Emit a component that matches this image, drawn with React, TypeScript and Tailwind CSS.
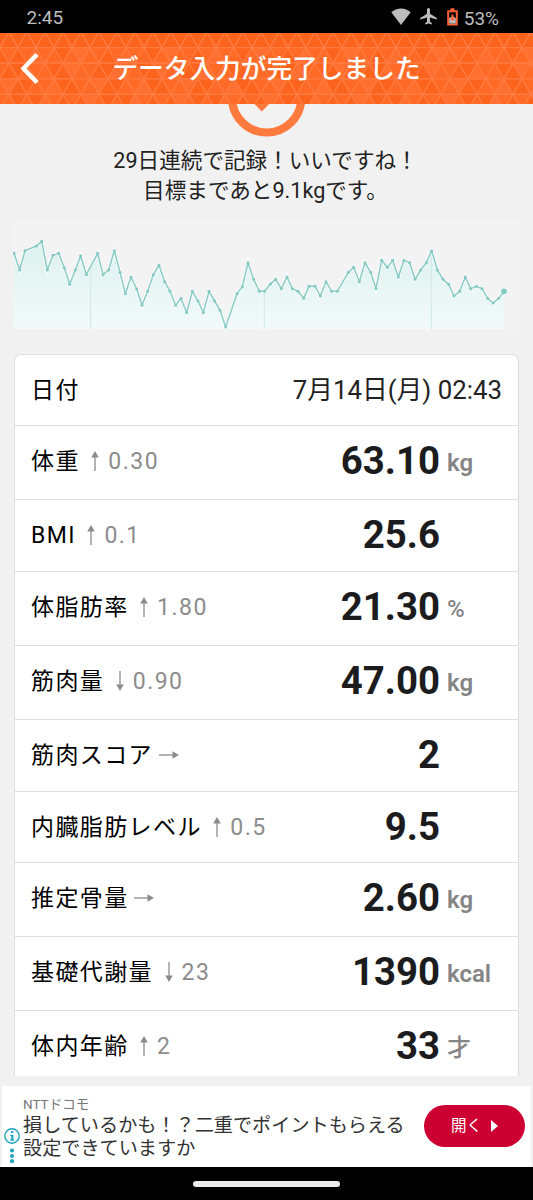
import { Fragment } from 'react'

type Direction = 'up' | 'down' | 'flat'

type Measurement = {
  label: string
  value: string
  unit?: string
  direction: Direction
  delta?: string
  height: string
}

const measurements: Measurement[] = [
  { label: '体重', value: '63.10', unit: 'kg', direction: 'up', delta: '0.30', height: 'h-[74px]' },
  { label: 'BMI', value: '25.6', direction: 'up', delta: '0.1', height: 'h-[72px]' },
  { label: '体脂肪率', value: '21.30', unit: '%', direction: 'up', delta: '1.80', height: 'h-[74px]' },
  { label: '筋肉量', value: '47.00', unit: 'kg', direction: 'down', delta: '0.90', height: 'h-[74px]' },
  { label: '筋肉スコア', value: '2', direction: 'flat', height: 'h-[72px]' },
  { label: '内臓脂肪レベル', value: '9.5', direction: 'up', delta: '0.5', height: 'h-[71px]' },
  { label: '推定骨量', value: '2.60', unit: 'kg', direction: 'flat', height: 'h-[74px]' },
  { label: '基礎代謝量', value: '1390', unit: 'kcal', direction: 'down', delta: '23', height: 'h-[74px]' },
  { label: '体内年齢', value: '33', unit: '才', direction: 'up', delta: '2', height: 'h-[65px]' },
]

// x, y pairs in chart units (3 units = 1px)
const history: [number, number][] = [
  [42, 340], [59, 390], [75, 332], [109, 318], [125, 304], [142, 390], [159, 346], [176, 340],
  [193, 383], [209, 433], [226, 390], [242, 347], [259, 404], [293, 340], [309, 404], [326, 390],
  [343, 332], [360, 397], [376, 461], [393, 411], [410, 447], [426, 496], [443, 454], [460, 404],
  [477, 375], [494, 425], [510, 454], [527, 496], [543, 475], [560, 518], [577, 454], [594, 483],
  [610, 518], [627, 454], [644, 483], [660, 511], [677, 561], [711, 461], [727, 440], [744, 368],
  [761, 418], [778, 454], [794, 454], [811, 432], [827, 418], [844, 446], [861, 411], [877, 446],
  [894, 454], [911, 475], [927, 439], [945, 439], [961, 468], [978, 425], [995, 454], [1012, 454],
  [1045, 397], [1061, 382], [1078, 425], [1095, 368], [1112, 397], [1128, 446], [1145, 361],
  [1162, 382], [1178, 361], [1195, 411], [1212, 361], [1229, 368], [1245, 418], [1262, 390],
  [1279, 368], [1295, 332], [1312, 390], [1329, 418], [1346, 433], [1362, 468], [1379, 454],
  [1396, 411], [1412, 446], [1429, 439], [1446, 446], [1463, 475], [1479, 489], [1496, 475],
  [1512, 454],
]

const months = [
  { x: 272, top: 382 },
  { x: 793, top: 454 },
  { x: 1294, top: 334 },
]

function TrianglePattern() {
  const side = 18
  const rowHeight = 15.6
  const rows = [0, 1, 2, 3, 4]
  const cols = Array.from({ length: 62 }, (_, i) => i - 1)

  return (
    <svg className="absolute inset-0 h-full w-full" viewBox="0 0 533 71" aria-hidden="true">
      <rect width="533" height="71" fill="#ff6c29" />
      {rows.map((row) => {
        const top = row * rowHeight - 1
        const bottom = top + rowHeight
        return (
          <Fragment key={row}>
            {cols.map((col) => {
              const x = (col * side) / 2
              const up = (row + col) % 2 === 0
              const tone = (col * 7 + row * 11 + ((col * row) % 5) * 3) % 7
              const points = up
                ? `${x},${bottom} ${x + side},${bottom} ${x + side / 2},${top}`
                : `${x},${top} ${x + side},${top} ${x + side / 2},${bottom}`
              return (
                <polygon
                  key={col}
                  points={points}
                  fill={tone < 2 ? '#fc641e' : tone < 5 ? '#ff6a27' : '#ff6f30'}
                  stroke="#ff7b40"
                  strokeWidth="1.3"
                />
              )
            })}
          </Fragment>
        )
      })}
    </svg>
  )
}

function StatusBar() {
  return (
    <div className="flex h-[33px] items-center bg-black pr-[34px] pl-[26.5px] text-[#bdbdbd]">
      <span className="flex-1 pt-0.5 text-[19px] leading-none">2:45</span>
      <svg className="mr-[9px] h-[17px] w-5" viewBox="0 0 20 17" fill="#bdbdbd">
        <path d="M10 17 0.3 4.2C3 1.8 6.3.4 10 .4s7 1.4 9.7 3.8Z" />
      </svg>
      <svg className="mr-[10px] h-[17px] w-[17px]" viewBox="0 0 17 17" fill="#bdbdbd">
        <path d="M16.8 11.6V10L10 5.8V1.5a1.5 1.5 0 0 0-3 0v4.3L.2 10v1.6L7 9.5v4.3l-1.9 1.4v1.4l3.4-1 3.4 1v-1.4L10 13.8V9.5Z" />
      </svg>
      <svg className="mr-[6px] h-[18px] w-[11px]" viewBox="0 0 11 18">
        <path d="M3.5 1.3h4M1.2 3.2h8.6v13.4H1.2Z" fill="none" stroke="#ff6036" strokeWidth="2" />
        <path d="M2.2 10.2 5.5 8l3.3 2.2v5.4H2.2Z" fill="#bdbdbd" />
        <path d="M5.5 6.5v4M3.6 11.2h3.8" stroke="#ff6036" strokeWidth="2" />
      </svg>
      <span className="pt-[3px] text-[19px] leading-none">53%</span>
    </div>
  )
}

function Header() {
  return (
    <header className="relative h-[71px]">
      <TrianglePattern />
      <div className="relative flex h-full items-center justify-center">
        <svg className="absolute left-5 h-8 w-5" viewBox="0 0 20 32" fill="none">
          <path d="M17 1.5 3.5 15.5 17 29.5" stroke="#fff" strokeWidth="4.4" />
        </svg>
        <h1 className="pt-[3px] text-[25.7px] leading-none font-medium text-white">データ入力が完了しました</h1>
      </div>
      {/* lower part of the achievement ring hanging under the bar */}
      <svg className="absolute top-[71px] left-[226px] h-[34px] w-[82px]" viewBox="226 104 82 34">
        <circle cx="266.7" cy="97.9" r="34.6" fill="#f2f2f2" stroke="#ff7a3d" strokeWidth="8.2" />
        <path d="M254.5 104h14.6l-7.3 7.4Z" fill="#ff7a3d" />
      </svg>
    </header>
  )
}

function HistoryChart() {
  const line = history.map(([x, y]) => `${x},${y}`).join(' ')

  return (
    <svg className="h-[110px] w-[507px]" viewBox="39 240 1521 330">
      <defs>
        <linearGradient id="area" x1="0" y1="0" x2="0" y2="1">
          <stop offset="0" stopColor="#dcf1ef" />
          <stop offset="1" stopColor="#f2faf9" />
        </linearGradient>
      </defs>
      <rect x="39" y="240" width="1521" height="330" fill="#f3f3f3" />
      <polygon points={`42,568 ${line} 1512,568`} fill="url(#area)" />
      {months.map(({ x, top }) => (
        <line key={x} x1={x} x2={x} y1={top} y2="568" stroke="#cfe8e6" strokeWidth="3" />
      ))}
      <polyline points={line} fill="none" stroke="#fff" strokeOpacity="0.6" strokeWidth="10" />
      <polyline points={line} fill="none" stroke="#8accc6" strokeWidth="4.5" strokeLinejoin="round" />
      {history.map(([x, y]) => (
        <circle key={x} cx={x} cy={y} r="4.5" fill="#83c9c2" />
      ))}
      <circle cx="1512" cy="454" r="8.5" fill="#7fcdc5" />
    </svg>
  )
}

const rotations: Record<Direction, string> = {
  up: '-rotate-90',
  down: 'rotate-90',
  flat: 'rotate-0',
}

function TrendArrow({ direction }: { direction: Direction }) {
  return (
    <svg className={`mt-[25px] ml-[5.5px] size-5 shrink-0 ${rotations[direction]}`} viewBox="0 0 20 20">
      <path d="M0 10h14" stroke="#8c8c8c" strokeWidth="1.3" />
      <path d="M13.5 6.2 20 10l-6.5 3.8Z" fill="#8c8c8c" />
    </svg>
  )
}

function MeasurementRow({ item }: { item: Measurement }) {
  return (
    <div className={`flex items-start border-b border-[#dedede] pr-[5px] pl-4 last:border-b-0 ${item.height}`}>
      <span className="pt-6 text-[23px] leading-none tracking-[1.4px] text-black">{item.label}</span>
      <TrendArrow direction={item.direction} />
      {item.delta && (
        <span className="pt-6 pl-[3px] text-[23px] leading-none tracking-[1.5px] text-[#8c8c8c]">{item.delta}</span>
      )}
      <span className="ml-auto pt-4 text-[38.4px] leading-none font-bold text-[#1c1c1e]">{item.value}</span>
      <span
        className={`w-[73px] shrink-0 pt-[25px] pl-[7px] text-[24px] leading-none text-[#858585] ${
          item.unit === '才' || item.unit === '%' ? 'font-medium' : 'font-semibold'
        }`}
      >
        {item.unit}
      </span>
    </div>
  )
}

function AdBanner() {
  return (
    <div className="mx-[2px] flex h-[81px] bg-white">
      <div className="flex w-5 shrink-0 flex-col items-center pt-[42px]">
        <svg className="h-[38px] w-5" viewBox="0 0 20 38" fill="#1fa5bb">
          <circle cx="10" cy="8" r="7.2" fill="none" stroke="#1fa5bb" strokeWidth="1.4" />
          <path d="M9 3h2.4v2H9ZM8.2 6.7h3.2v4.7h1v1.3H8.2v-1.3h1V8h-1Z" />
          <circle cx="10" cy="22.5" r="2.1" />
          <circle cx="10" cy="28" r="2.1" />
          <circle cx="10" cy="33.2" r="2.1" />
        </svg>
      </div>
      <div className="flex-1 pt-[10px] pl-px whitespace-nowrap">
        <p className="text-[13.5px] leading-4 text-[#777]">NTTドコモ</p>
        <p className="pt-0.5 text-[19.15px] leading-[23px] text-[#333]">
          損しているかも！？二重でポイントもらえる
          <br />
          設定できていますか
        </p>
      </div>
      <button className="mt-[19px] mr-[6px] flex h-[42px] w-[101px] shrink-0 items-center rounded-full bg-[#cc0033] pt-0.5 pl-[27px] text-[15.5px] text-white">
        開く
        <svg className="mb-0.5 ml-[9px] h-3 w-[7px]" viewBox="0 0 7 12">
          <path d="M0 0 7 6 0 12Z" fill="#fff" />
        </svg>
      </button>
    </div>
  )
}

export default function App() {
  return (
    <div className="flex h-[1200px] w-[533px] flex-col overflow-hidden bg-[#f1f1f1] font-[Roboto,'Noto_Sans_CJK_JP',sans-serif]">
      <StatusBar />
      <Header />

      <main className="flex h-[982px] flex-col">
        <p className="h-[116px] pt-[42px] pr-0.5 text-center text-[21.6px] leading-[30px] text-[#222]">
          29日連続で記録！いいですね！
          <br />
          目標まであと9.1kgです。
        </p>

        <div className="pl-[13px]">
          <HistoryChart />
        </div>

        <section className="mx-[14px] mt-6 h-[722px] overflow-hidden rounded-t-[7px] border border-b-0 border-[#dedede] bg-white">
          <div className="flex h-[71px] items-start border-b border-[#dedede] px-4">
            <span className="pt-6 text-[23px] leading-none tracking-[1.4px] text-black">日付</span>
            <span className="ml-auto pt-[23px] text-[25.8px] leading-none text-[#222]">7月14日(月) 02:43</span>
          </div>
          {measurements.map((item) => (
            <MeasurementRow key={item.label} item={item} />
          ))}
        </section>
      </main>

      <AdBanner />

      <footer className="flex h-[33px] items-center justify-center bg-black">
        <div className="h-[6px] w-[147px] rounded-full bg-[#ebebeb]" />
      </footer>
    </div>
  )
}
